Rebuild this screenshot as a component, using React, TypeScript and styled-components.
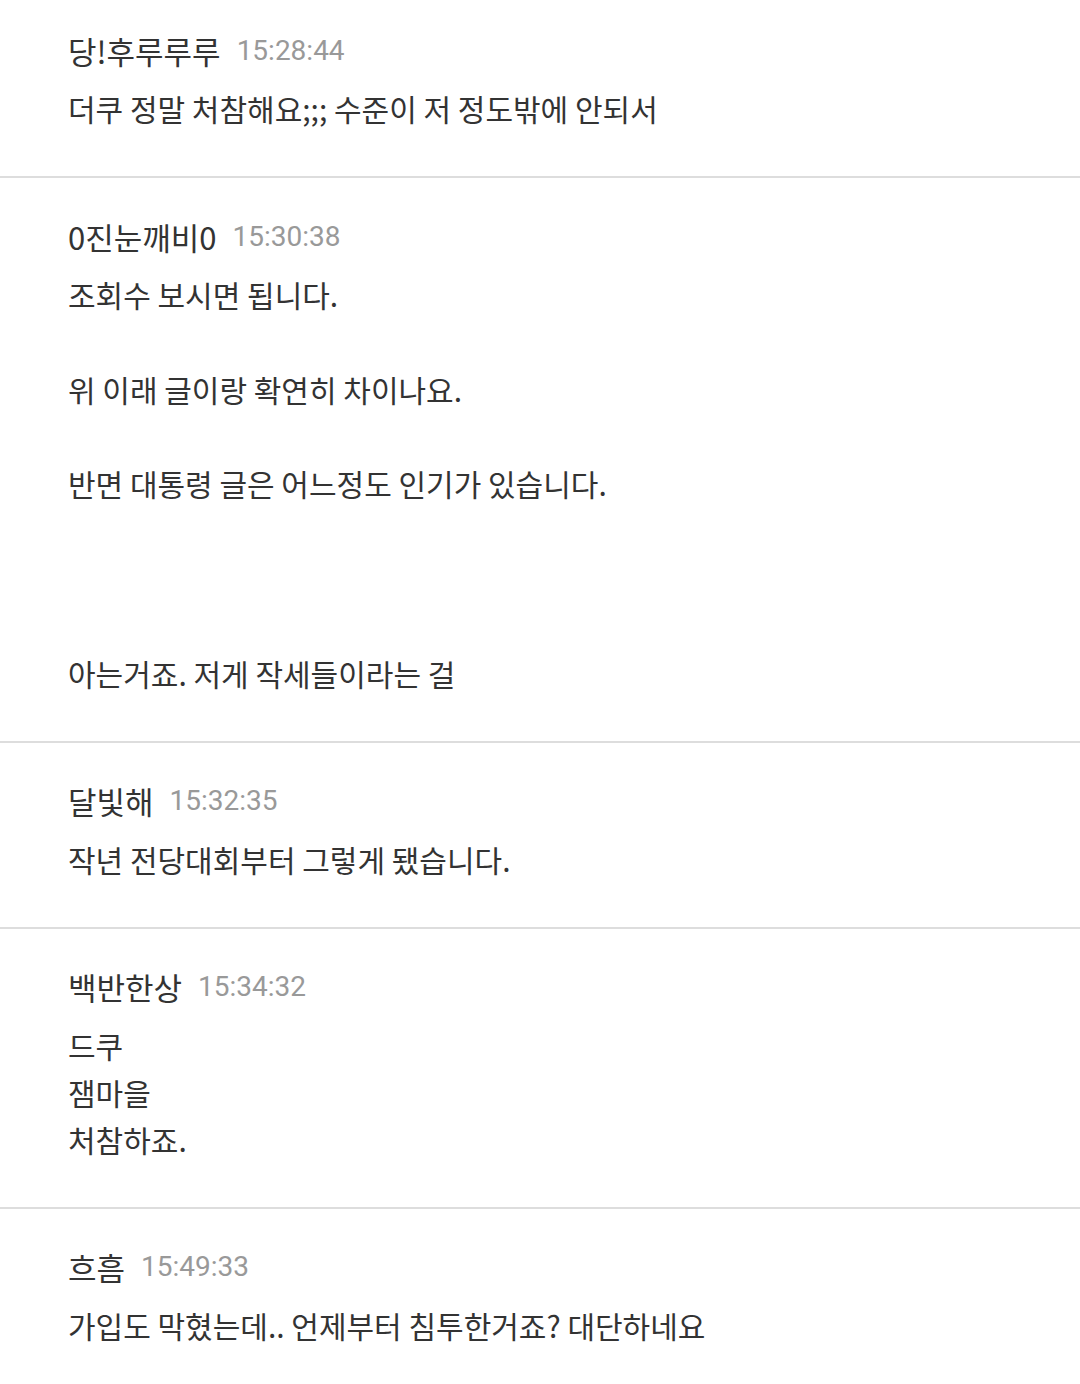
import React from 'react';
import styled, { createGlobalStyle } from 'styled-components';

interface Comment {
  author: string;
  time: string;
  lines: string[];
}

const comments: Comment[] = [
  { author: '당!후루루루', time: '15:28:44', lines: ['더쿠 정말 처참해요;;; 수준이 저 정도밖에 안되서'] },
  {
    author: '0진눈깨비0',
    time: '15:30:38',
    lines: ['조회수 보시면 됩니다.', '', '위 이래 글이랑 확연히 차이나요.', '', '반면 대통령 글은 어느정도 인기가 있습니다.', '', '', '', '아는거죠. 저게 작세들이라는 걸'],
  },
  { author: '달빛해', time: '15:32:35', lines: ['작년 전당대회부터 그렇게 됐습니다.'] },
  { author: '백반한상', time: '15:34:32', lines: ['드쿠', '잼마을', '처참하죠.'] },
  { author: '흐흠', time: '15:49:33', lines: ['가입도 막혔는데.. 언제부터 침투한거죠? 대단하네요'] },
];

const GlobalStyle = createGlobalStyle`
  html, body {
    margin: 0;
    padding: 0;
    background: #ffffff;
  }
  body {
    font-family: "Noto Sans CJK KR", "Noto Sans", sans-serif;
    color: #333333;
  }
`;

const List = styled.div`
  display: flex;
  flex-direction: column;
  margin-top: -8px;
`;

const Item = styled.div`
  padding: 38px 68px 44px;
  border-bottom: 2px solid #dddddd;

  &:last-child {
    border-bottom: none;
  }
`;

const Header = styled.div`
  display: flex;
  align-items: center;
  height: 40px;
  margin-bottom: 15px;
`;

const Author = styled.span`
  font-size: 31px;
  color: #333333;
`;

const Time = styled.span`
  font-family: Roboto, "Noto Sans", sans-serif;
  font-size: 28px;
  color: #999999;
  margin-left: 16px;
`;

const Body = styled.div`
  font-size: 30px;
  line-height: 47px;
  color: #333333;
`;

const Line = styled.div<{ $empty: boolean }>`
  min-height: ${p => (p.$empty ? '47.5px' : '47px')};
  line-height: ${p => (p.$empty ? '47.5px' : '47px')};
`;

export default function App() {
  return (
    <>
      <GlobalStyle />
      <List>
        {comments.map((c, i) => (
          <Item key={i}>
            <Header>
              <Author>{c.author}</Author>
              <Time>{c.time}</Time>
            </Header>
            <Body>
              {c.lines.map((line, j) => (
                <Line key={j} $empty={line === ''}>{line}</Line>
              ))}
            </Body>
          </Item>
        ))}
      </List>
    </>
  );
}
